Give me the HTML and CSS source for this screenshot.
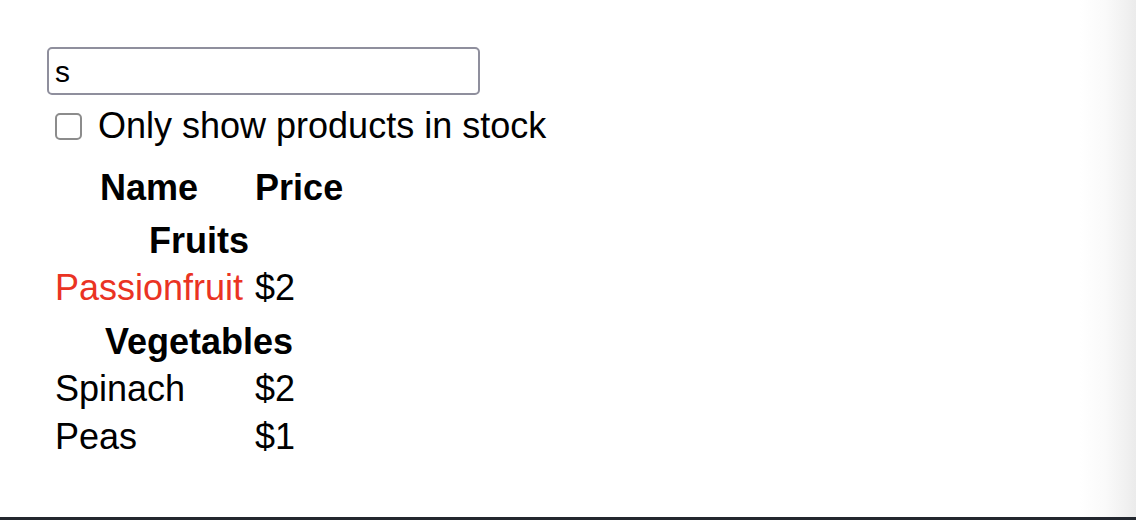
FILE: index.html
```html
<!DOCTYPE html>
<html lang="en">
<head>
<meta charset="utf-8">
<title>Filterable product table</title>
<link rel="stylesheet" href="styles.css">
</head>
<body>
<div class="frame">
  <main class="app">
    <form class="search-bar">
      <input class="search-input" type="text" value="s" placeholder="Search...">
      <label class="stock-label">
        <input class="stock-check" type="checkbox">
        <span>Only show products in stock</span>
      </label>
    </form>
    <table class="product-table">
      <thead>
        <tr><th class="head-cell">Name</th><th class="head-cell">Price</th></tr>
      </thead>
      <tbody>
        <tr><th class="cat-cell" colspan="2">Fruits</th></tr>
        <tr><td class="cell out-of-stock">Passionfruit</td><td class="cell">$2</td></tr>
        <tr><th class="cat-cell" colspan="2">Vegetables</th></tr>
        <tr><td class="cell">Spinach</td><td class="cell">$2</td></tr>
        <tr><td class="cell">Peas</td><td class="cell">$1</td></tr>
      </tbody>
    </table>
  </main>
  <div class="edge-shade"></div>
</div>
<div class="bottom-bar"></div>
</body>
</html>
```

FILE: styles.css
```css
html, body {
  margin: 0;
  padding: 0;
  height: 100%;
  background: #fff;
}

body {
  display: grid;
  grid-template-rows: 1fr 3px;
  font-family: "Liberation Sans", Arial, sans-serif;
  color: #000;
}

.frame {
  display: flex;
  min-height: 0;
}

.app {
  flex: 1;
  padding: 47px 0 0 47px;
}

.edge-shade {
  width: 56px;
  background: linear-gradient(to right, #ffffff 0%, #fafafa 45%, #f1f1f1 80%, #ebebeb 100%);
}

.bottom-bar {
  background: #23272f;
}

.search-bar {
  margin: 0;
}

.search-input {
  display: block;
  box-sizing: border-box;
  width: 433px;
  height: 48px;
  margin: 0;
  padding: 2px 6px 0;
  border: 2px solid #8f8f9d;
  border-radius: 5px;
  font-family: "Liberation Sans", Arial, sans-serif;
  font-size: 30px;
  color: #000;
  background: #fff;
  outline: none;
}

.stock-label {
  display: flex;
  align-items: center;
  gap: 16px;
  height: 40px;
  margin-top: 11px;
  padding-left: 8px;
  font-size: 36px;
  line-height: 40px;
}

.stock-check {
  appearance: none;
  -webkit-appearance: none;
  box-sizing: border-box;
  width: 27px;
  height: 27px;
  margin: 0;
  border: 2px solid #8c8c8c;
  border-radius: 5px;
  background: #fff;
  flex: none;
}

.product-table {
  margin-top: 12px;
  border-collapse: separate;
  border-spacing: 4px 0;
  font-size: 36px;
  line-height: 40px;
}

.head-cell,
.cat-cell {
  padding: 10px 4px 3px;
  font-weight: bold;
  text-align: center;
}

.cell {
  padding: 4px 4px;
  text-align: left;
}

.out-of-stock {
  color: #ea3323;
}
```
